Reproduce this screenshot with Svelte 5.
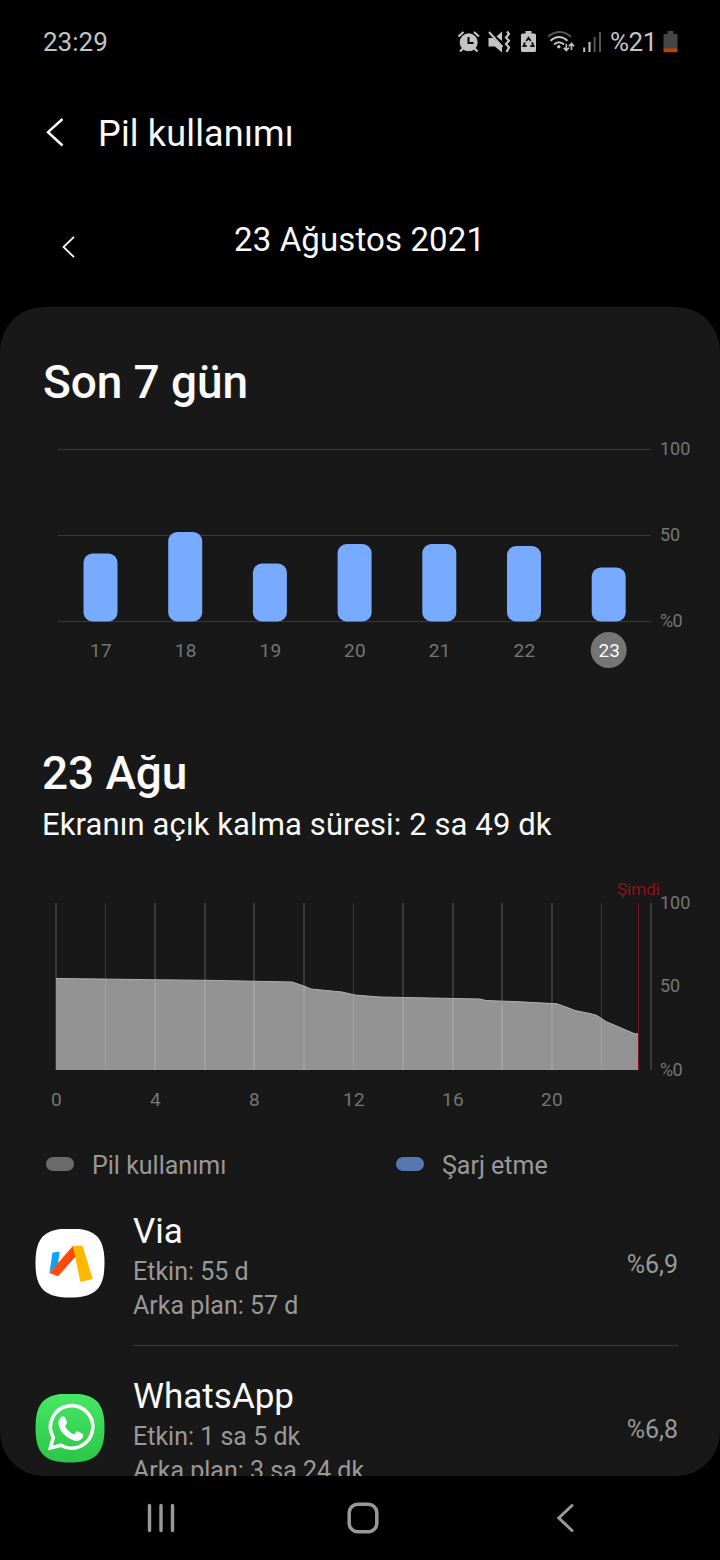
<script>
  const days = [
    { day: 17, x: 83.5, top: 553.5 },
    { day: 18, x: 168.2, top: 532 },
    { day: 19, x: 252.9, top: 563.5 },
    { day: 20, x: 337.6, top: 544 },
    { day: 21, x: 422.3, top: 544 },
    { day: 22, x: 507, top: 546 },
    { day: 23, x: 591.7, top: 567.5 }
  ];
  let selected = $state(23);

  const thinLines = [105, 353, 601];
  const thickLines = [55, 154, 204, 253, 303, 402, 452, 501, 551, 650];
  const hours = [
    { hour: 0, x: 56.5 },
    { hour: 4, x: 155.5 },
    { hour: 8, x: 254.5 },
    { hour: 12, x: 354 },
    { hour: 16, x: 453 },
    { hour: 20, x: 552 }
  ];
  const level = "56,978.5 100,979 150,979.7 206,980.3 292,982 304,986 311,989 342,992 355,995 380,997 430,998 480,999 486,1000.5 520,1001.8 557,1003.8 566,1007 575,1010.5 590,1013.5 597,1015.5 606,1021.5 620,1027.5 634,1033.5 638,1034";

  const apps = [
    { id: "via", name: "Via", active: "Etkin: 55 d", background: "Arka plan: 57 d", usage: "%6,9" },
    { id: "whatsapp", name: "WhatsApp", active: "Etkin: 1 sa 5 dk", background: "Arka plan: 3 sa 24 dk", usage: "%6,8" }
  ];
  const squircle = "M34.5 0C60 0 69 9 69 34.5S60 69 34.5 69 0 60 0 34.5 9 0 34.5 0Z";
</script>

<div class="screen">
  <header class="status">
    <span class="clock">23:29</span>
    <div class="status-icons">
      <svg class="icons" width="146" height="24" viewBox="456 30 146 24">
        <!-- alarm -->
        <circle cx="468.7" cy="42.3" r="9" fill="#c4c4c4" />
        <path d="M458.500 36.500l5-4.500M479 36.500l-5-4.500M463 48.500l-3 3M474.500 48.500l3 3" stroke="#c4c4c4" stroke-width="2.200" fill="none" />
        <path d="M468.500 37v6h5" stroke="#000" stroke-width="2" fill="none" />
        <!-- muted, vibrate -->
        <path d="M488.500 38h4.500l9 8.500v6l-7-6h-6.500zM496.500 36.500l5.500-5v9.500z" fill="#c4c4c4" />
        <path d="M489 32l13.500 15" stroke="#c4c4c4" stroke-width="2" />
        <path d="M507 31.500l2 2.500-3 3.500 3 3.200-3 3.300 3 3.500-2.500 4.500" stroke="#c4c4c4" stroke-width="2.200" fill="none" />
        <!-- battery saver -->
        <path d="M525.500 31h6v2.500h3q1.500 0 1.500 1.500v15.500q0 1.500-1.500 1.500h-12q-1.500 0-1.500-1.500V35q0-1.500 1.500-1.500h3z" fill="#c4c4c4" />
        <path d="M526.200 41l2.300-3.200 2.300 3.200M532 42.300l1.500 3.700h-3.200M525 42.300l-1.500 3.700h3.200" stroke="#111" stroke-width="1.900" fill="none" />
        <!-- wifi -->
        <path d="M548 36.800q11.500-9.500 23 0" stroke="#555" stroke-width="2" fill="none" />
        <path d="M550.500 40.800q8.500-7.500 17 0M554 44.500q5-4.500 10 0" stroke="#c4c4c4" stroke-width="2" fill="none" />
        <circle cx="558.800" cy="46.700" r="1.700" fill="#c4c4c4" />
        <path d="M566.300 44v6M563.700 47.700l2.600 2.800 2.600-2.800M571.500 50v-6M568.900 46.300l2.600-2.800 2.600 2.800" stroke="#c4c4c4" stroke-width="1.600" fill="none" />
        <!-- signal -->
        <path d="M584.200 47.500v4.500M589.500 42v10" stroke="#c4c4c4" stroke-width="2" />
        <path d="M594.600 37v15M600 32v20" stroke="#555" stroke-width="2" />
      </svg>
      <span class="percent">%21</span>
      <svg class="battery" width="15" height="22" viewBox="0 0 15 22">
        <path d="M4.500 0h6v3H14.500V18H.5V3h4z" fill="#454545" />
        <path d="M.5 17.500h14V20.500l-.5.700H1l-.5-.7z" fill="#b84600" />
      </svg>
    </div>
  </header>

  <div class="titlebar">
    <svg width="20" height="30" viewBox="0 0 20 30"><path d="M17.500 2L3 15.200l14.500 13.300" fill="none" stroke="#fafafa" stroke-width="2.500" /></svg>
    <h1>Pil kullanımı</h1>
  </div>

  <div class="date-row">
    <svg width="16" height="24" viewBox="0 0 16 24"><path d="M13 1.800L2.500 12 13 22.200" fill="none" stroke="#fafafa" stroke-width="1.800" /></svg>
    <span class="date">23 Ağustos 2021</span>
  </div>

  <main class="panel">
    <h2>Son 7 gün</h2>
    <svg class="chart" width="720" height="250" viewBox="0 430 720 250">
      {#each [449, 535, 621] as y}
        <rect x="58" {y} width="593" height="1" fill="#393939" />
      {/each}
      {#each days as d}
        <rect x={d.x} y={d.top} width="34" height={621.5 - d.top} rx="9" fill="#78aaff" />
        {#if d.day === selected}
          <circle cx={d.x + 17} cy="650" r="18" fill="#757575" />
        {/if}
        <text class="day" class:selected={d.day === selected} x={d.x + 17.5} y="657">{d.day}</text>
      {/each}
      <text class="axis" x="660" y="455">100</text>
      <text class="axis" x="660" y="541">50</text>
      <text class="axis unit" x="660" y="627">%0</text>
    </svg>

    <h2 class="day-title">23 Ağu</h2>
    <p class="screen-time">Ekranın açık kalma süresi: 2 sa 49 dk</p>
    <svg class="chart" width="720" height="250" viewBox="0 870 720 250">
      {#each thinLines as x}
        <rect {x} y="903" width="1" height="167" fill="#393939" />
      {/each}
      {#each thickLines as x}
        <rect {x} y="903" width="2" height="167" fill="#393939" />
      {/each}
      <polygon points="{level} 638,1070 56,1070" fill="#939393" />
      {#each thinLines as x}
        <rect {x} y={x > 600 ? 1019 : x > 300 ? 995 : 980} width="1" height={x > 600 ? 51 : x > 300 ? 75 : 90} fill="#9f9f9f" />
      {/each}
      {#each thickLines.slice(1, -1) as x}
        <rect {x} y={x > 500 ? 1004 : x > 400 ? 999 : x > 300 ? 987 : 982} width="2" height={x > 500 ? 66 : x > 400 ? 71 : x > 300 ? 83 : 88} fill="#9f9f9f" />
      {/each}
      <polyline points={level} fill="none" stroke="#b0b0b0" stroke-width="1" />
      <rect x="638" y="903" width="1" height="167" fill="#7d1220" />
      <text class="now" x="617" y="895">Şimdi</text>
      <text class="axis" x="660" y="909">100</text>
      <text class="axis" x="660" y="992">50</text>
      <text class="axis unit" x="660" y="1076">%0</text>
      {#each hours as h}
        <text class="day" x={h.x} y="1106">{h.hour}</text>
      {/each}
    </svg>

    <div class="legend">
      <div class="legend-item"><i class="pill used"></i>Pil kullanımı</div>
      <div class="legend-item"><i class="pill charge"></i>Şarj etme</div>
    </div>

    <div class="apps">
      {#each apps as app}
        <div class="app">
          <svg class="app-icon" width="70" height="69" viewBox="-0.5 0.5 70 69">
            {#if app.id === "via"}
              <path d={squircle} fill="#fff" />
              <path d="M17 24l7-.8-1.500 12L14 44z" fill="#0aa5fa" />
              <path d="M37.500 17.200L40 28 22.500 47.800 13.800 44.500z" fill="#ff4a0a" />
              <path d="M37.500 17.200h9.500l10.200 33.200-12.400 3.200z" fill="#ffb800" />
            {:else}
              <defs>
                <linearGradient id="wa" x1="0" y1="0" x2="0" y2="1">
                  <stop offset="0" stop-color="#47e765" />
                  <stop offset="1" stop-color="#2bc647" />
                </linearGradient>
              </defs>
              <path d={squircle} fill="url(#wa)" />
              <path d="M14.800 54.500l3-10.500a21.200 21.200 0 1 1 7.700 7.700z" fill="none" stroke="#fff" stroke-width="3.600" />
              <path d="M26.500 23.200c1.500-.6 2.600-.3 3.100.9l1.800 4.400c.4 1 0 1.800-1.900 3.900 2 4 5 6.800 9.100 8.500 2.200-2.700 2.700-3.400 3.900-2.900l4.500 2.200c1 .5.900 1.400.5 2.800-.9 3.100-4.100 4.600-7 4.400-8-.8-17.100-9.500-17.600-17.300-.1-3.200 1.600-6.100 3.600-7z" fill="#fff" />
            {/if}
          </svg>
          <div class="body">
            <div class="info">
              <div class="name">{app.name}</div>
              <div class="detail">{app.active}</div>
              <div class="detail">{app.background}</div>
            </div>
            <span class="usage">{app.usage}</span>
          </div>
        </div>
      {/each}
    </div>
  </main>

  <nav>
    <svg width="30" height="30" viewBox="0 0 30 30"><path d="M2.500 2.500v25M14 2.500v25M25.500 2.500v25" stroke="#999" stroke-width="3.400" stroke-linecap="round" /></svg>
    <svg class="home" width="32" height="32" viewBox="0 0 32 32"><rect x="2.200" y="2.200" width="27.600" height="27.600" rx="8.500" fill="none" stroke="#999" stroke-width="3.500" /></svg>
    <svg width="18" height="30" viewBox="0 0 18 30"><path d="M16 2.500L2.800 15 16 27.500" fill="none" stroke="#999" stroke-width="3" stroke-linecap="round" /></svg>
  </nav>
</div>

<style>
  :global(body) {
    background: #000;
  }
  .screen {
    width: 720px;
    height: 1560px;
    display: flex;
    flex-direction: column;
    overflow: hidden;
    background: #000;
    color: #fafafa;
    font-family: Roboto, "Noto Sans", sans-serif;
  }
  svg {
    display: block;
    flex: none;
  }
  h1, h2, p {
    margin: 0;
    font-weight: 400;
  }
  .status {
    flex: none;
    height: 84px;
    box-sizing: border-box;
    padding: 0 42px 0 43px;
    display: flex;
    align-items: center;
    justify-content: space-between;
    color: #c4c4c4;
    font-size: 26px;
  }
  .status-icons {
    display: flex;
    align-items: center;
  }
  .percent {
    margin: 0 6px 0 8px;
    letter-spacing: -0.4px;
  }
  .titlebar {
    flex: none;
    height: 99px;
    padding-left: 45px;
    display: flex;
    align-items: center;
    gap: 33px;
  }
  .titlebar svg {
    margin-bottom: 3px;
  }
  h1 {
    font-size: 36px;
    letter-spacing: 0.17px;
  }
  .date-row {
    flex: none;
    height: 112px;
    margin-bottom: 12px;
    padding-left: 61px;
    display: flex;
    align-items: center;
  }
  .date-row svg {
    margin-top: 16px;
  }
  .date {
    margin-left: 157px;
    font-size: 33px;
    letter-spacing: 0.12px;
    white-space: nowrap;
  }
  .panel {
    flex: none;
    height: 1169px;
    border-radius: 44px;
    background: #181818;
    overflow: hidden;
  }
  h2 {
    height: 60px;
    padding: 45px 0 18px 43px;
    font-size: 46px;
    line-height: 60px;
    font-weight: 500;
    letter-spacing: -0.1px;
  }
  .day-title {
    padding: 63px 0 1px 42px;
  }
  .screen-time {
    padding-left: 42px;
    height: 66px;
    font-size: 31px;
    line-height: 41px;
    letter-spacing: 0.11px;
  }
  .day {
    font-size: 19px;
    fill: #757575;
    text-anchor: middle;
    letter-spacing: 0.3px;
  }
  .day.selected {
    fill: #fafafa;
    letter-spacing: 0;
  }
  .axis {
    font-size: 18px;
    fill: #757575;
  }
  .unit {
    letter-spacing: -0.8px;
  }
  .now {
    font-size: 17px;
    fill: #8c1220;
  }
  .legend {
    height: 31px;
    padding: 30px 0 0 46px;
    display: flex;
    color: #999;
    font-size: 25px;
    line-height: 31px;
  }
  .legend-item {
    flex: none;
    width: 350px;
    box-sizing: border-box;
    display: flex;
    gap: 18px;
  }
  .legend-item + .legend-item {
    width: auto;
  }
  .pill {
    width: 28px;
    height: 14px;
    margin-top: 7px;
    border-radius: 7px;
  }
  .used {
    background: #6b6b6b;
  }
  .charge {
    background: #5578b3;
  }
  .app {
    height: 165px;
    padding-left: 35px;
    display: flex;
    align-items: center;
    gap: 28px;
  }
  .body {
    width: 545px;
    height: 165px;
    box-sizing: border-box;
    display: flex;
    justify-content: space-between;
    border-bottom: 1px solid #393939;
  }
  .info {
    padding-top: 28px;
  }
  .name {
    height: 46px;
    font-size: 35px;
    line-height: 45px;
  }
  .detail {
    color: #999;
    font-size: 25px;
    line-height: 34px;
  }
  .usage {
    color: #999;
    font-size: 25px;
    line-height: 168px;
  }
  nav {
    flex: none;
    height: 84px;
    padding: 0 146px 0 147px;
    display: flex;
    align-items: center;
  }
  .home {
    margin: 0 auto 0 170px;
  }
</style>
